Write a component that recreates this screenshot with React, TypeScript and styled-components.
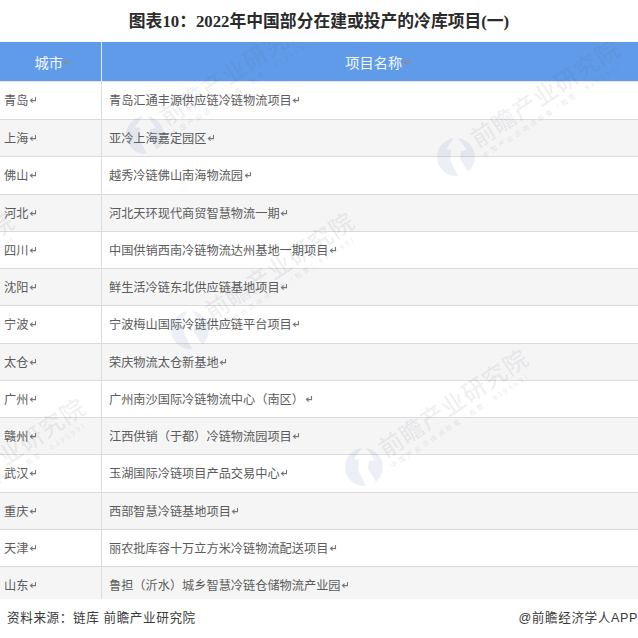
import styled, { createGlobalStyle } from 'styled-components';

const GlobalStyle = createGlobalStyle`
  html, body {
    margin: 0;
    padding: 0;
    background: #fff;
  }
  body {
    font-family: 'Liberation Sans', 'Noto Sans CJK SC', sans-serif;
  }
`;

const Page = styled.div`
  width: 638px;
  height: 638px;
  display: flex;
  flex-direction: column;
  overflow: hidden;
`;

const Title = styled.h1`
  height: 42px;
  box-sizing: border-box;
  margin: 0;
  padding-bottom: 2px;
  display: flex;
  align-items: center;
  justify-content: center;
  font-family: 'Liberation Serif', 'Noto Sans CJK SC', serif;
  font-size: 16.8px;
  font-weight: 700;
  color: #2b2b2b;
`;

const TableWrap = styled.div`
  position: relative;
  height: 557px;
  overflow: hidden;
`;

const HeaderRow = styled.div`
  height: 39.85px;
  display: grid;
  grid-template-columns: 101px 1px 1fr;
  background: #5f9be9;
  border-bottom: 1px solid #dfe6f0;
  box-sizing: border-box;
`;

const HeaderCell = styled.div<{ $shift: number }>`
  display: flex;
  align-items: center;
  justify-content: center;
  padding: 2px 0 0 ${(p) => p.$shift}px;
  font-size: 14.2px;
  color: #f4f8fe;
`;

const HeaderDivider = styled.div`
  background: #e4edf9;
`;

const Row = styled.div<{ $shaded: boolean }>`
  height: 37.25px;
  box-sizing: border-box;
  display: grid;
  grid-template-columns: 101px 1px 1fr;
  background: ${(p) => (p.$shaded ? '#f5f5f5' : '#fff')};

  & + & {
    border-top: 1px solid #dadada;
  }
`;

const Divider = styled.div`
  background: #dcdcdc;
`;

const Cell = styled.div<{ $inset: number }>`
  display: flex;
  align-items: center;
  padding-left: ${(p) => p.$inset}px;
  font-size: 12.2px;
  color: #5b5b5b;
  white-space: nowrap;
`;

const Mark = styled.svg`
  width: 8px;
  height: 8px;
  flex: none;
  margin-left: 0.5px;
`;

const Watermark = styled.div<{ $x: number; $y: number }>`
  position: absolute;
  left: ${(p) => p.$x}px;
  top: ${(p) => p.$y}px;
  display: flex;
  align-items: center;
  gap: 4px;
  transform: translate(-19px, -19px) rotate(-33.5deg);
  transform-origin: 19px 19px;
  pointer-events: none;
  white-space: nowrap;
`;

const WatermarkLogo = styled.svg`
  width: 38px;
  height: 38px;
  flex: none;
`;

const WatermarkText = styled.div`
  display: flex;
  flex-direction: column;
  font-family: 'Noto Sans CJK SC', sans-serif;
`;

const WatermarkName = styled.div`
  font-size: 24px;
  line-height: 28px;
  font-weight: 500;
  letter-spacing: 0.8px;
  color: rgba(90, 100, 125, 0.1);
`;

const WatermarkSlogan = styled.div`
  font-size: 7px;
  line-height: 10px;
  letter-spacing: 2.4px;
  color: rgba(90, 100, 125, 0.16);
`;

const Footer = styled.div`
  flex: 1;
  display: flex;
  align-items: center;
  justify-content: space-between;
  padding: 0 0 4px 7px;
  font-size: 12.6px;
  letter-spacing: 0.6px;
  color: #3a3a3a;
`;

const rows = [
  ['青岛', '青岛汇通丰源供应链冷链物流项目'],
  ['上海', '亚冷上海嘉定园区'],
  ['佛山', '越秀冷链佛山南海物流园'],
  ['河北', '河北天环现代商贸智慧物流一期'],
  ['四川', '中国供销西南冷链物流达州基地一期项目'],
  ['沈阳', '鲜生活冷链东北供应链基地项目'],
  ['宁波', '宁波梅山国际冷链供应链平台项目'],
  ['太仓', '荣庆物流太仓新基地'],
  ['广州', '广州南沙国际冷链物流中心（南区）'],
  ['赣州', '江西供销（于都）冷链物流园项目'],
  ['武汉', '玉湖国际冷链项目产品交易中心'],
  ['重庆', '西部智慧冷链基地项目'],
  ['天津', '丽农批库容十万立方米冷链物流配送项目'],
  ['山东', '鲁担（沂水）城乡智慧冷链仓储物流产业园'],
];

// logo centres, relative to the table
const watermarks = [
  { x: 145, y: 93 },
  { x: 456, y: 115 },
  { x: -150, y: 288 },
  { x: 190, y: 288 },
  { x: -79, y: 474 },
  { x: 364, y: 425 },
];

function ReturnMark({ color = '#777' }: { color?: string }) {
  return (
    <Mark viewBox="0 0 8 8" fill="none" stroke={color} strokeWidth={1.1}>
      <path d="M6.5 1v3.6H2" />
      <path d="M3.6 2.6 1.4 4.6l2.2 2" />
    </Mark>
  );
}

export default function App() {
  return (
    <Page>
      <GlobalStyle />
      <Title>图表10：2022年中国部分在建或投产的冷库项目(一)</Title>
      <TableWrap>
        <HeaderRow>
          <HeaderCell $shift={5}>
            城市
            <ReturnMark color="#8d8d8d" />
          </HeaderCell>
          <HeaderDivider />
          <HeaderCell $shift={16}>
            项目名称
            <ReturnMark color="#8d8d8d" />
          </HeaderCell>
        </HeaderRow>
        {rows.map(([city, project], i) => (
          <Row key={city} $shaded={i % 2 === 1}>
            <Cell $inset={4}>
              {city}
              <ReturnMark />
            </Cell>
            <Divider />
            <Cell $inset={7}>
              {project}
              <ReturnMark />
            </Cell>
          </Row>
        ))}
        {watermarks.map((w) => (
          <Watermark key={`${w.x}-${w.y}`} $x={w.x} $y={w.y}>
            <WatermarkLogo viewBox="0 0 38 38">
              <g transform="rotate(33.5 19 19)" fill="rgba(110, 130, 175, 0.13)">
                <path d="M17 .1A19 19 0 0 0 21 37.9L13 22l1-10-5-1Z" />
                <path d="M21 .1A19 19 0 0 1 31 33.7L23 21l1-8 6-1Z" />
              </g>
            </WatermarkLogo>
            <WatermarkText>
              <WatermarkName>前瞻产业研究院</WatermarkName>
              <WatermarkSlogan>中国产业咨询领导者（股票：839599）</WatermarkSlogan>
            </WatermarkText>
          </Watermark>
        ))}
      </TableWrap>
      <Footer>
        <span>资料来源：链库 前瞻产业研究院</span>
        <span>@前瞻经济学人APP</span>
      </Footer>
    </Page>
  );
}
